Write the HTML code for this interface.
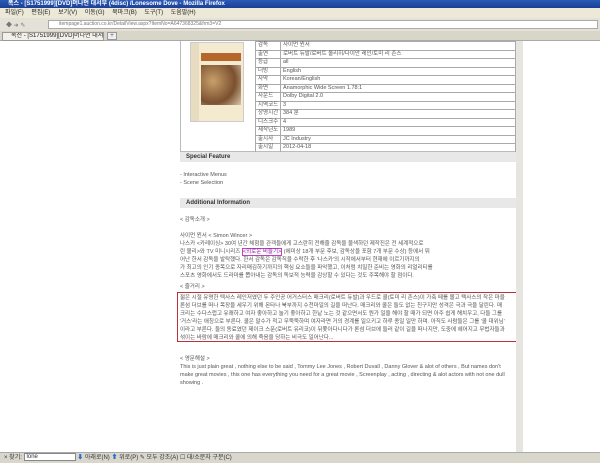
<!DOCTYPE html>
<html><head><meta charset="utf-8"><style>
*{margin:0;padding:0;box-sizing:border-box}
body{width:600px;height:463px;overflow:hidden;background:#fff;font-family:"Liberation Sans","Noto Sans CJK KR",sans-serif;font-size:6px;color:#555;position:relative}
.abs{position:absolute}
.title{left:0;top:0;width:600px;height:8px;background:linear-gradient(#2a5bb8,#1c3f95);color:#fff;font-weight:bold;font-size:6px;line-height:8px;padding-left:8px;white-space:nowrap}
.menu{left:0;top:8px;width:600px;height:10px;background:#ece9d8;color:#222;line-height:10px;padding-left:5px;word-spacing:6px;white-space:nowrap}
.nav{left:0;top:18px;width:600px;height:13px;background:#e4e2d8}
.url{left:48px;top:20px;width:550px;height:9px;background:#fff;border:1px solid #aaa;color:#777;font-size:5px;line-height:7px;padding-left:10px;white-space:nowrap}
.tabs{left:0;top:31px;width:600px;height:10px;background:#d8d5c9;border-bottom:1px solid #aaa}
.tab{left:2px;top:32px;width:102px;height:9px;background:#f2f0e8;border:1px solid #999;color:#222;line-height:7px;padding-left:8px;white-space:nowrap;overflow:hidden}
.find{left:0;top:452px;width:600px;height:11px;background:#d9d6cc;border-top:1px solid #aaa;color:#333;line-height:10px;padding-left:4px;white-space:nowrap}
.scroll{left:516px;top:41px;width:7px;height:411px;background:#e6e5e0}
table{border-collapse:collapse}
td{border:1px solid #aaa;height:8.5px;line-height:7px;padding-left:2px;font-size:5.5px;white-space:nowrap}
.sec{background:#e8e8e8;color:#333;font-weight:bold;height:10px;line-height:10px;padding-left:6px}
.txt{line-height:8px;font-size:5.5px}
</style></head><body>
<div class="abs title">폭스 - [S1751999][DVD]머나먼 대서부 (4disc) /Lonesome Dove - Mozilla Firefox</div>
<div class="abs menu">파일(F) 편집(E) 보기(V) 이동(G) 북마크(B) 도구(T) 도움말(H)</div>
<div class="abs nav"><span class="abs" style="left:6px;top:2px;color:#777">◆ ➜ ✎</span></div>
<div class="abs url">itempage1.auction.co.kr/DetailView.aspx?ItemNo=A647368325&frm3=V2</div>
<div class="abs tabs"></div>
<div class="abs tab">옥션 - [S1751999][DVD]머나먼 대서</div>
<div class="abs" style="left:107px;top:32px;width:10px;height:8px;border:1px solid #999;background:#eee;font-size:6px;line-height:6px;text-align:center">+</div>

<div class="abs" style="left:180px;top:41px;width:336px;height:111px;border:1px solid #bbb;border-top:none"></div>
<div class="abs" style="left:190px;top:42px;width:54px;height:80px;background:linear-gradient(90deg,#e8dcc0 0 8px,#f3ead0 8px);border:1px solid #ccc">
 <div class="abs" style="left:10px;top:10px;width:40px;height:8px;background:#b5672b"></div>
 <div class="abs" style="left:10px;top:22px;width:40px;height:40px;background:radial-gradient(circle at 30% 40%,#c9a06a,#7a5030 60%,#d8c8a8)"></div>
</div>
<div class="abs" style="left:255px;top:41px;width:261px">
<table style="width:261px">
<tr><td style="width:25px">감독</td><td>사이먼 윈서</td></tr>
<tr><td>출연</td><td>로버트 듀발/로버트 올리히/다이안 레인/토미 리 존스</td></tr>
<tr><td>등급</td><td>all</td></tr>
<tr><td>더빙</td><td>English</td></tr>
<tr><td>자막</td><td>Korean/English</td></tr>
<tr><td>화면</td><td>Anamorphic Wide Screen 1.78:1</td></tr>
<tr><td>사운드</td><td>Dolby Digital 2.0</td></tr>
<tr><td>지역코드</td><td>3</td></tr>
<tr><td>상영시간</td><td>384 분</td></tr>
<tr><td>디스크수</td><td>4</td></tr>
<tr><td>제작년도</td><td>1989</td></tr>
<tr><td>출시사</td><td>JC Industry</td></tr>
<tr><td>출시일</td><td>2012-04-18</td></tr>
</table></div>
<div class="abs" style="left:516px;top:41px;width:2px;height:111px;background:#aaa"></div>

<div class="abs sec" style="left:180px;top:152px;width:336px">Special Feature</div>
<div class="abs txt" style="left:180px;top:171px">- Interactive Menus<br>- Scene Selection</div>
<div class="abs sec" style="left:180px;top:198px;width:336px">Additional Information</div>
<div class="abs txt" style="left:180px;top:216px">&lt; 감독소개 &gt;</div>
<div class="abs txt" style="left:180px;top:232px;width:336px;white-space:nowrap;overflow:hidden">사이먼 윈서 &lt; Simon Wincer &gt;<br>나스카 &lt;카레이싱&gt; 30여 년간 체험을 관객들에게 고스란히 전해줄 감독을 물색하던 제작진은 전 세계적으로<br>린 볼리&gt;와 TV 미니시리즈 <span style="border:1px solid #c040c0;color:#8020a0">&lt;외로운 비둘기&gt;</span> (에미상 18개 부문 후보, 감독상을 포함 7개 부문 수상) 등에서 뛰<br>어난 한서 감독을 발탁했다. 한서 감독은 감독직을 수락한 후 '나스카'의 시작에서부터 현재에 이르기까지의<br>가 최고의 인기 종목으로 자리매김하기까지의 핵심 요소들을 파악했고, 이처럼 치밀한 준비는 영화의 리얼리티를<br>스포츠 영화에서도 드라마를 뽑아내는 감독의 독보적 능력을 감상할 수 있다는 것도 주목해야 할 점이다.</div>
<div class="abs txt" style="left:180px;top:283px">&lt; 줄거리 &gt;</div>
<div class="abs txt" style="left:177px;top:292px;width:340px;height:50px;border:1px solid #c0303a;padding:1px 2px;white-space:nowrap;overflow:hidden;line-height:8px">젊은 시절 유명한 텍사스 레인저였던 두 주인공 어거스터스 매크리(로버트 듀발)과 우드로 콜(토미 리 존스)이 가축 떼를 몰고 텍사스의 작은 마을<br>론섬 더브를 떠나 목장을 세우기 위해 몬타나 북부까지 수천마일의 길을 떠난다. 매크리와 콜은 둘도 없는 친구지만 성격은 극과 극을 달린다. 매<br>크리는 수다스럽고 유쾌하고 여자 좋아하고 놀기 좋아하고 한낱 노는 것 같으면서도 뭔가 일을 해야 할 때가 되면 아주 쉽게 해치우고, 다들 그를<br>'거스'라는 애칭으로 부른다. 콜은 말수가 적고 무뚝뚝하며 여자라면 거의 경계를 일으키고 하루 종일 일만 하며. 아직도 사람들은 그를 '콜 대위님'<br>이라고 부른다. 둘의 동료였던 제이크 스푼(로버트 유리코)이 뒤쫓아다니다가 론섬 더브에 들러 같이 길을 떠나지만, 도중에 헤어지고 무법자들과<br>섞이는 바람에 매크리와 콜에 의해 죽음을 당하는 비극도 일어난다...</div>
<div class="abs txt" style="left:180px;top:355px;width:336px;white-space:nowrap;overflow:hidden">&lt; 영문해설 &gt;<br>This is just plain great , nothing else to be said , Tommy Lee Jones , Robert Duvall , Danny Glover &amp; alot of others , But names don't<br>make great movies , this one has everything you need for a great movie , Screenplay , acting , directing &amp; alot actors with not one dull<br>showing .</div>
<div class="abs scroll"></div>
<div class="abs find">× 찾기: <span style="display:inline-block;width:52px;height:8px;background:#fff;border:1px solid #888;vertical-align:middle;line-height:6px;padding-left:2px">lone</span> <span style="color:#2a6ad0">⬇</span> 아래로(N) <span style="color:#2a6ad0">⬆</span> 위로(P) ✎ 모두 강조(A) ☐ 대/소문자 구분(C)</div>
</body></html>
